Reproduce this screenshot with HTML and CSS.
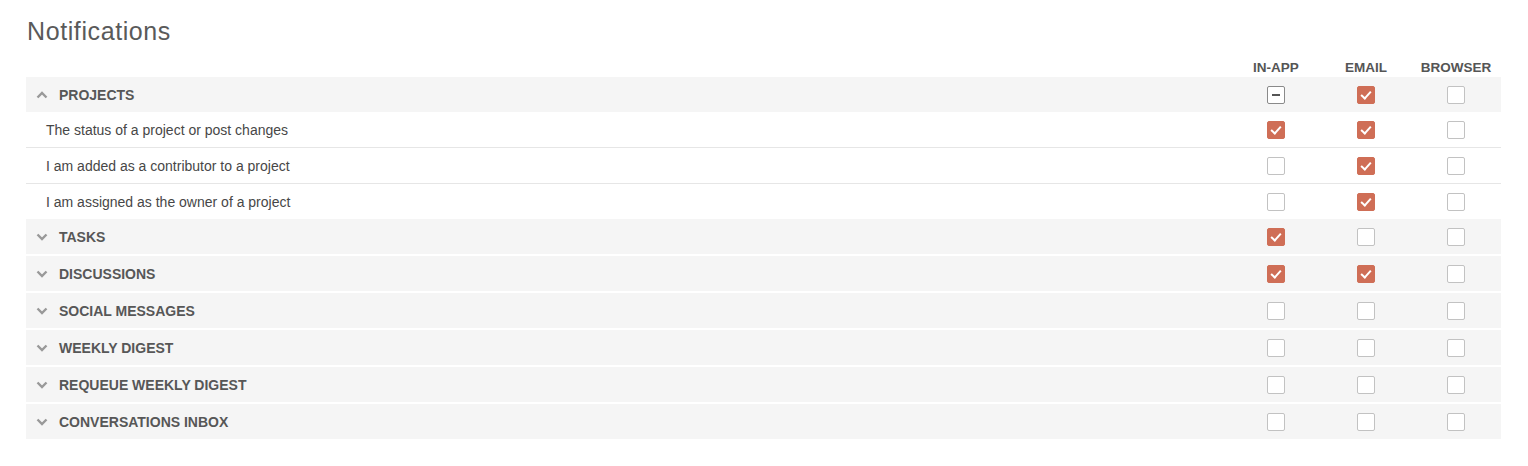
FILE: index.html
```html
<!DOCTYPE html>
<html lang="en">
<head>
    <meta charset="UTF-8">
    <title>Notifications</title>
    <link rel="stylesheet" href="styles.css">
</head>
<body>

    <div class="page">
        <h1 class="title">Notifications</h1>

        <div class="table">
            <!-- Column headers -->
            <div class="row head-row">
                <div></div>
                <div class="col-label">IN-APP</div>
                <div class="col-label">EMAIL</div>
                <div class="col-label">BROWSER</div>
            </div>

            <!-- Projects (expanded) -->
            <div class="group open">
                <div class="row cat-row">
                    <div class="cat-name">
                        <svg class="chev" width="12" height="8" viewBox="0 0 12 8"><polyline points="1.5,6.5 6,2 10.5,6.5" fill="none" stroke="#999" stroke-width="2.4"/></svg>
                        PROJECTS
                    </div>
                    <div class="cell"><span class="box mixed"></span></div>
                    <div class="cell"><span class="box on"></span></div>
                    <div class="cell"><span class="box"></span></div>
                </div>
                <div class="row sub-row">
                    <div class="sub-name">The status of a project or post changes</div>
                    <div class="cell"><span class="box on"></span></div>
                    <div class="cell"><span class="box on"></span></div>
                    <div class="cell"><span class="box"></span></div>
                </div>
                <div class="row sub-row">
                    <div class="sub-name">I am added as a contributor to a project</div>
                    <div class="cell"><span class="box"></span></div>
                    <div class="cell"><span class="box on"></span></div>
                    <div class="cell"><span class="box"></span></div>
                </div>
                <div class="row sub-row last">
                    <div class="sub-name">I am assigned as the owner of a project</div>
                    <div class="cell"><span class="box"></span></div>
                    <div class="cell"><span class="box on"></span></div>
                    <div class="cell"><span class="box"></span></div>
                </div>
            </div>

            <div class="group">
                <div class="row cat-row">
                    <div class="cat-name">
                        <svg class="chev" width="12" height="8" viewBox="0 0 12 8"><polyline points="1.5,1.5 6,6 10.5,1.5" fill="none" stroke="#999" stroke-width="2.4"/></svg>
                        TASKS
                    </div>
                    <div class="cell"><span class="box on"></span></div>
                    <div class="cell"><span class="box"></span></div>
                    <div class="cell"><span class="box"></span></div>
                </div>
            </div>

            <div class="group">
                <div class="row cat-row">
                    <div class="cat-name">
                        <svg class="chev" width="12" height="8" viewBox="0 0 12 8"><polyline points="1.5,1.5 6,6 10.5,1.5" fill="none" stroke="#999" stroke-width="2.4"/></svg>
                        DISCUSSIONS
                    </div>
                    <div class="cell"><span class="box on"></span></div>
                    <div class="cell"><span class="box on"></span></div>
                    <div class="cell"><span class="box"></span></div>
                </div>
            </div>

            <div class="group">
                <div class="row cat-row">
                    <div class="cat-name">
                        <svg class="chev" width="12" height="8" viewBox="0 0 12 8"><polyline points="1.5,1.5 6,6 10.5,1.5" fill="none" stroke="#999" stroke-width="2.4"/></svg>
                        SOCIAL MESSAGES
                    </div>
                    <div class="cell"><span class="box"></span></div>
                    <div class="cell"><span class="box"></span></div>
                    <div class="cell"><span class="box"></span></div>
                </div>
            </div>

            <div class="group">
                <div class="row cat-row">
                    <div class="cat-name">
                        <svg class="chev" width="12" height="8" viewBox="0 0 12 8"><polyline points="1.5,1.5 6,6 10.5,1.5" fill="none" stroke="#999" stroke-width="2.4"/></svg>
                        WEEKLY DIGEST
                    </div>
                    <div class="cell"><span class="box"></span></div>
                    <div class="cell"><span class="box"></span></div>
                    <div class="cell"><span class="box"></span></div>
                </div>
            </div>

            <div class="group">
                <div class="row cat-row">
                    <div class="cat-name">
                        <svg class="chev" width="12" height="8" viewBox="0 0 12 8"><polyline points="1.5,1.5 6,6 10.5,1.5" fill="none" stroke="#999" stroke-width="2.4"/></svg>
                        REQUEUE WEEKLY DIGEST
                    </div>
                    <div class="cell"><span class="box"></span></div>
                    <div class="cell"><span class="box"></span></div>
                    <div class="cell"><span class="box"></span></div>
                </div>
            </div>

            <div class="group">
                <div class="row cat-row">
                    <div class="cat-name">
                        <svg class="chev" width="12" height="8" viewBox="0 0 12 8"><polyline points="1.5,1.5 6,6 10.5,1.5" fill="none" stroke="#999" stroke-width="2.4"/></svg>
                        CONVERSATIONS INBOX
                    </div>
                    <div class="cell"><span class="box"></span></div>
                    <div class="cell"><span class="box"></span></div>
                    <div class="cell"><span class="box"></span></div>
                </div>
            </div>
        </div>
    </div>

</body>
</html>
```

FILE: styles.css
```css
body {
    font-family: "Liberation Sans", Arial, sans-serif;
    margin: 0;
    padding: 0;
    background: #fff;
    color: #4a4a4a;
}
.page {
    padding: 16px 27px 0 26px;
}
.title {
    margin: 0 0 0 1px;
    font-size: 25px;
    font-weight: normal;
    letter-spacing: 0.6px;
    line-height: 30px;
    color: #5a5a5a;
}
.table {
    width: 1475px;
    margin-top: 11px;
}
.row {
    display: grid;
    grid-template-columns: 1fr 90px 90px 90px;
    align-items: center;
}
.head-row {
    height: 20px;
}
.col-label {
    text-align: center;
    font-size: 13.5px;
    font-weight: bold;
    color: #555;
}
.group {
    margin-bottom: 2px;
}
.group.open {
    margin-bottom: 0;
}
.cat-row {
    height: 35px;
    background: #f5f5f5;
}
.cat-name {
    display: flex;
    align-items: center;
    padding-left: 10px;
    font-size: 14px;
    font-weight: bold;
    color: #575757;
}
.chev {
    margin-right: 11px;
}
.sub-row {
    height: 35px;
    border-bottom: 1px solid #e6e6e6;
}
.sub-row.last {
    border-bottom: none;
}
.sub-name {
    padding-left: 20px;
    font-size: 14px;
    color: #474747;
}
.cell {
    display: flex;
    justify-content: center;
    align-items: center;
}
.box {
    display: block;
    position: relative;
    width: 16px;
    height: 16px;
    border: 1px solid #c2c2c2;
    border-radius: 2px;
    background: #fff;
}
.box.on {
    background: #cf6e56;
    border-color: #cf6e56;
}
.box.on::after {
    content: "";
    position: absolute;
    left: 5px;
    top: 2px;
    width: 4px;
    height: 8px;
    border: solid #fff;
    border-width: 0 2px 2px 0;
    transform: rotate(42deg);
}
.box.mixed {
    border-color: #8a8a8a;
}
.box.mixed::after {
    content: "";
    position: absolute;
    left: 4px;
    top: 7px;
    width: 8px;
    height: 2px;
    background: #555;
}
```
